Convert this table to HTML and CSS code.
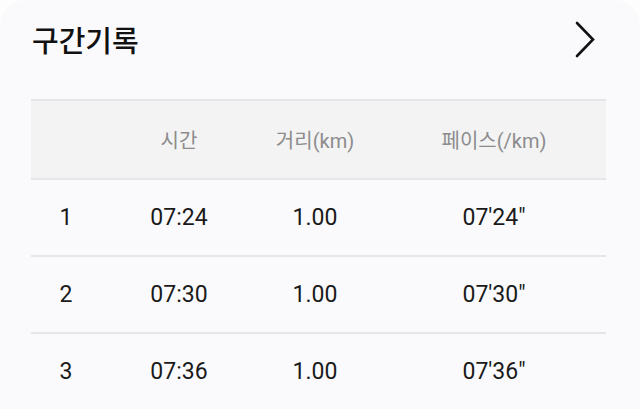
FILE: index.html
```html
<!DOCTYPE html>
<html lang="ko">
<head>
<meta charset="utf-8">
<link rel="stylesheet" href="styles.css">
</head>
<body>
<div class="card">
  <div class="head">
    <h1 class="title">구간기록</h1>
    <svg class="chev" width="24" height="40" viewBox="0 0 24 40"><path d="M3 3 L19 19.5 L3 36" fill="none" stroke="#111" stroke-width="2.6" stroke-linecap="round" stroke-linejoin="miter"/></svg>
  </div>
  <div class="table">
    <div class="row th">
      <div class="c c1"></div>
      <div class="c c2">시간</div>
      <div class="c c3">거리(km)</div>
      <div class="c c4">페이스(/km)</div>
    </div>
    <div class="row">
      <div class="c c1">1</div>
      <div class="c c2">07:24</div>
      <div class="c c3">1.00</div>
      <div class="c c4">07'24"</div>
    </div>
    <div class="row">
      <div class="c c1">2</div>
      <div class="c c2">07:30</div>
      <div class="c c3">1.00</div>
      <div class="c c4">07'30"</div>
    </div>
    <div class="row">
      <div class="c c1">3</div>
      <div class="c c2">07:36</div>
      <div class="c c3">1.00</div>
      <div class="c c4">07'36"</div>
    </div>
  </div>
</div>
</body>
</html>
```
FILE: styles.css
```css
html, body {
  margin: 0;
  padding: 0;
  background: #fdfdfe;
}
body {
  width: 640px;
  height: 409px;
  overflow: hidden;
  font-family: Roboto, "Noto Sans CJK KR", sans-serif;
  color: #1a1a1a;
}
.card {
  background: #fafafc;
  border-radius: 26px 26px 0 0;
  height: 409px;
  padding: 0 34px 0 31px;
  box-sizing: border-box;
}
.head {
  height: 80px;
  display: flex;
  align-items: center;
  justify-content: space-between;
  margin-bottom: 19px;
}
.title {
  margin: 0;
  font-family: "Noto Sans CJK KR", sans-serif;
  font-size: 29px;
  font-weight: 500;
  color: #111;
  line-height: 1;
  padding-left: 1px;
  margin-top: -2px;
}
.chev {
  display: block;
  margin-right: 8px;
  margin-top: -1px;
}
.table {
  border-top: 2px solid #e6e6e8;
}
.row {
  display: grid;
  grid-template-columns: 70px 156px 116px 1fr;
  height: 75px;
  align-items: center;
  border-bottom: 2px solid #e6e6e8;
  font-size: 23px;
  color: #1a1a1a;
}
.row:last-child {
  border-bottom: none;
}
.row.th {
  height: 77px;
  background: #f3f3f4;
  font-size: 20px;
  color: #8c8c8c;
  font-family: Roboto, "Noto Sans CJK KR", sans-serif;
}
.c {
  text-align: center;
}
.c4 {
  padding-left: 9px;
}
```
